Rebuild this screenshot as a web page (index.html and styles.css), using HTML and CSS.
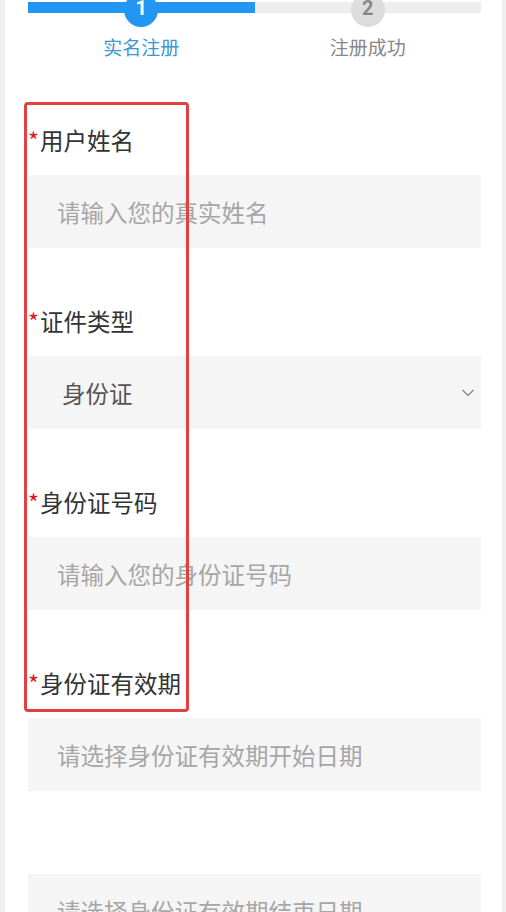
FILE: index.html
```html
<!DOCTYPE html>
<html lang="zh-CN">
<head>
  <meta charset="UTF-8">
  <meta name="viewport" content="width=device-width, initial-scale=1.0">
  <title>实名注册</title>
  <link rel="stylesheet" href="styles.css">
</head>
<body>
  <div class="page">
    <div class="steps">
      <div class="track">
        <div class="track-done"></div>
        <div class="track-todo"></div>
      </div>
      <div class="step-list">
        <div class="step active">
          <div class="step-num">1</div>
          <div class="step-name">实名注册</div>
        </div>
        <div class="step">
          <div class="step-num">2</div>
          <div class="step-name">注册成功</div>
        </div>
      </div>
    </div>

    <form class="form">
      <div class="field">
        <label class="label"><span class="star">*</span>用户姓名</label>
        <input class="input" type="text" placeholder="请输入您的真实姓名">
      </div>
      <div class="field">
        <label class="label"><span class="star">*</span>证件类型</label>
        <div class="select">
          <span class="select-value">身份证</span>
          <svg class="chevron" width="12" height="8" viewBox="0 0 12 8"><path d="M0.5 1 L6 6.5 L11.5 1" fill="none" stroke="#808080" stroke-width="1.1"/></svg>
        </div>
      </div>
      <div class="field">
        <label class="label"><span class="star">*</span>身份证号码</label>
        <input class="input" type="text" placeholder="请输入您的身份证号码">
      </div>
      <div class="field date-field">
        <label class="label"><span class="star">*</span>身份证有效期</label>
        <input class="input" type="text" placeholder="请选择身份证有效期开始日期">
      </div>
      <div class="field">
        <input class="input" type="text" placeholder="请选择身份证有效期结束日期">
      </div>

      <div class="highlight"></div>
    </form>
  </div>
</body>
</html>
```

FILE: styles.css
```css
:root {
  --blue: #2196f3;
  --label: #333;
  --hint: #a6a6a6;
  --field-bg: #f5f5f5;
  --mark: #e04141;
}

* {
  box-sizing: border-box;
  margin: 0;
  padding: 0;
  font-family: 'Noto Sans CJK SC', 'Noto Sans', sans-serif;
}

body {
  background-color: #efefef;
  overflow: hidden;
}

.page {
  background: white;
  margin: 0 4px 0 5px;
  padding: 0 21px 0 23px;
  min-height: 100vh;
}

/* progress steps */
.steps {
  padding-top: 2px;
}

.track {
  display: flex;
  height: 11px;
}

.track-done {
  flex: 1;
  background-color: var(--blue);
}

.track-todo {
  flex: 1;
  background-color: #eeeeee;
}

.step-list {
  display: flex;
  margin-top: -20px;
  position: relative;
}

.step {
  flex: 1;
  display: flex;
  flex-direction: column;
  align-items: center;
}

.step-num {
  width: 34px;
  height: 34px;
  border-radius: 50%;
  background-color: #dddddd;
  color: #888;
  font-family: 'Roboto', 'Liberation Sans', sans-serif;
  font-weight: bold;
  font-size: 20px;
  line-height: 30px;
  text-align: center;
}

.step-name {
  margin-top: 7px;
  font-size: 19px;
  line-height: 26px;
  color: #888;
}

.step.active .step-num {
  background-color: var(--blue);
  color: white;
}

.step.active .step-name {
  color: #3b98d6;
}

/* form */
.form {
  position: relative;
  padding-top: 64px;
}

.field {
  margin-bottom: 57px;
}

.date-field {
  margin-bottom: 83px;
}

.label {
  display: block;
  font-size: 23.5px;
  line-height: 32px;
  color: var(--label);
  margin-bottom: 19px;
}

.star {
  color: #e01b1b;
  margin-right: 1px;
}

.input {
  display: block;
  width: 100%;
  height: 73px;
  border: none;
  outline: none;
  background-color: var(--field-bg);
  padding: 0 29px;
  font-size: 23.5px;
  color: var(--label);
}

.input::placeholder {
  color: var(--hint);
}

.select {
  display: flex;
  align-items: center;
  justify-content: space-between;
  height: 73px;
  background-color: var(--field-bg);
  padding: 0 7px 0 34px;
  font-size: 23.5px;
  color: #555;
}

.highlight {
  position: absolute;
  left: -4px;
  top: 42px;
  width: 165px;
  height: 610px;
  border: 3px solid var(--mark);
  border-radius: 4px;
  pointer-events: none;
}
```
